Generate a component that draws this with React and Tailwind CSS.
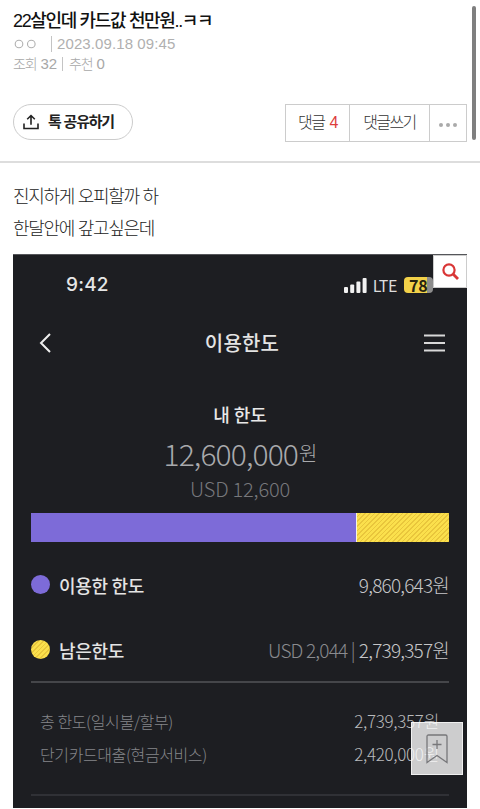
import React from 'react';

const helvetica = "font-['Liberation_Sans','Noto_Sans_CJK_KR',sans-serif]";
const noto = "font-['Noto_Sans_CJK_KR',sans-serif]";

const stripes = 'bg-[repeating-linear-gradient(135deg,#fbe04c_0px,#fbe04c_2.2px,#e9c63c_2.2px,#e9c63c_3.3px)]';

const PostHeader = () => (
    <header className="h-[163px] border-b-2 border-[#dddddd] pl-[13px] pr-[13px] pt-2">
        <h1 className="h-[26px] text-[18px] leading-[26px] font-medium tracking-[-1.35px] text-[#111111]">22살인데 카드값 천만원..ㅋㅋ</h1>
        <div className="flex h-5 items-center text-[15px] leading-5 text-[#b0b0b0]">
            <svg className="w-[23px] h-3 shrink-0" viewBox="0 0 23 12" fill="none" stroke="#b0b0b0" strokeWidth="1.1">
                <circle cx="6" cy="6" r="3.8" />
                <circle cx="18.3" cy="6" r="3.8" />
            </svg>
            <span className="ml-[15px] h-4 w-px bg-[#c4c4c4]"></span>
            <span className="ml-[5px] tracking-[0.1px]">2023.09.18 09:45</span>
        </div>
        <div className="flex h-5 items-center text-[14px] leading-5 font-light text-[#a8a8a8]">
            <span className="tracking-[-1.2px]">조회</span>
            <span className="ml-1 text-[15px] font-normal">32</span>
            <span className="ml-[5px] h-[14px] w-px bg-[#c4c4c4]"></span>
            <span className="ml-[6px] tracking-[-1.2px]">추천</span>
            <span className="ml-1 text-[15px] font-normal">0</span>
        </div>
        <div className="mt-[30px] flex items-start justify-between">
            <button className="flex h-9 w-[120px] items-center rounded-full border border-[#cccccc] pl-[9px]">
                <svg className="h-4 w-4" viewBox="0 0 16 16" fill="none" stroke="#222222" strokeWidth="1.6">
                    <path d="M1 9.5V14.5H15V9.5M8 10.8V1.6M4.2 5.2L8 1.5L11.8 5.2" />
                </svg>
                <span className="ml-[9px] text-[15px] leading-5 font-bold tracking-[-1.2px] whitespace-nowrap text-[#222222]">톡 공유하기</span>
            </button>
            <div className="flex h-[38px] w-[182px] border border-[#cccccc] text-[16px] leading-9 font-light text-[#333333]">
                <button className="flex w-[64px] justify-center border-r border-[#cccccc] tracking-[-1.5px]">
                    댓글<span className="ml-[5px] font-normal text-[#dd3c3c]">4</span>
                </button>
                <button className="w-[80px] border-r border-[#cccccc] tracking-[-1.6px]">댓글쓰기</button>
                <button className="flex flex-1 items-center justify-center gap-[3px] pt-1">
                    <i className="h-1 w-1 rounded-full bg-[#aaaaaa]"></i>
                    <i className="h-1 w-1 rounded-full bg-[#aaaaaa]"></i>
                    <i className="h-1 w-1 rounded-full bg-[#aaaaaa]"></i>
                </button>
            </div>
        </div>
    </header>
);

const StatusBar = () => (
    <div className="flex h-[60px] items-center justify-between pl-[53px] pr-[34px]">
        <span className="font-['Inter',sans-serif] text-[19px] font-medium tracking-[0.2px] text-[#e6e6e6]">9:42</span>
        <div className="flex items-center">
            <svg className="h-[15px] w-[23px]" viewBox="0 0 23 15" fill="#f2f2f2">
                <rect x="0" y="9" width="4" height="6" rx="1" />
                <rect x="6.2" y="6.5" width="4" height="8.5" rx="1" />
                <rect x="12.4" y="3.5" width="4" height="11.5" rx="1" />
                <rect x="18.6" y="0" width="4" height="15" rx="1" />
            </svg>
            <span className="ml-[6px] font-['Noto_Sans_CJK_KR',sans-serif] text-[16px] leading-5 tracking-[-0.4px] text-[#dddddd]">LTE</span>
            <span className="ml-[7px] flex h-4 w-[29px] items-center rounded-[4px] bg-[linear-gradient(to_right,#f2d149_23px,#8d8d8d_23px)] pl-[5px] font-['Noto_Sans_CJK_KR',sans-serif] text-[16px] leading-4 font-bold tracking-[-0.3px] text-[#252211]">78</span>
        </div>
    </div>
);

const Usage = ({ color, label, usd, amount }) => (
    <div className="flex h-[65px] items-center">
        <i className={`h-[19px] w-[19px] rounded-full ${color}`}></i>
        <span className="ml-[9px] text-[18px] leading-6 font-medium tracking-[-0.3px] text-[#e4e4e4]">{label}</span>
        <span className="ml-auto flex text-[19px] leading-6 font-light tracking-[-0.8px] text-[#c6c6c8]">
            {usd && <span className="mr-1 text-[#8a8b8f]">USD {usd} |</span>}
            {amount}원
        </span>
    </div>
);

const Detail = ({ label, amount }) => (
    <div className="flex h-[33px] items-center justify-between pl-[9px] pr-[10px]">
        <span className="text-[16px] leading-6 font-light tracking-[-0.4px] text-[#85868a]">{label}</span>
        <span className="text-[17px] leading-6 font-light tracking-[-0.3px] text-[#b9babc]">{amount}원</span>
    </div>
);

const LimitScreen = () => (
    <section className={`relative mx-[13px] h-[554px] border-t border-[#55565a] bg-[#1d1e22] ${noto}`}>
        <StatusBar />
        <div className="flex h-14 items-center justify-between pl-[26px] pr-[22px]">
            <svg className="h-5 w-3" viewBox="0 0 12 20" fill="none" stroke="#eeeeee" strokeWidth="2">
                <path d="M11 1L2 10L11 19" />
            </svg>
            <h2 className="ml-[9px] text-[20px] leading-7 font-medium tracking-[0.2px] text-[#e4e4e4]">이용한도</h2>
            <svg className="h-[18px] w-[21px]" viewBox="0 0 21 18" stroke="#d8d8d8" strokeWidth="2">
                <path d="M0 1.5H21M0 9H21M0 16.5H21" />
            </svg>
        </div>
        <div className="mt-7 flex flex-col items-center">
            <p className="h-[30px] text-[18px] leading-[30px] font-medium text-[#e8e8e8]">내 한도</p>
            <p className="flex h-[48px] text-[30px] leading-[48px] font-light tracking-[-0.9px] text-[#a9aaad]">
                12,600,000<span className="ml-px text-[20px]">원</span>
            </p>
            <p className="h-[24px] text-[20px] leading-[24px] font-light tracking-[-0.2px] text-[#77787c]">USD 12,600</p>
        </div>
        <div className="mx-[18px]">
            <div className="mt-3 flex h-[29px]">
                <div className="w-[325px] bg-[#7d6bd8]"></div>
                <div className="w-px bg-[#f6f3df]"></div>
                <div className={`flex-1 ${stripes}`}></div>
            </div>
            <div className="mt-[10px]">
                <Usage color="bg-[#7d6bd8]" label="이용한 한도" amount="9,860,643" />
                <Usage color={stripes} label="남은한도" usd="2,044" amount="2,739,357" />
            </div>
            <div className="-mt-px border-y-2 border-t-[#45464a] border-b-[#303136] pt-[21px] pb-[24px]">
                <Detail label="총 한도(일시불/할부)" amount="2,739,357" />
                <Detail label="단기카드대출(현금서비스)" amount="2,420,000" />
            </div>
        </div>
        <button className="absolute top-0 right-0 flex h-[33px] w-[34px] items-center justify-center border border-[#cccccc] bg-white">
            <svg className="h-[17px] w-[17px]" viewBox="0 0 17 17" fill="none" stroke="#d93636" strokeWidth="2.2">
                <circle cx="7" cy="7" r="5.6" />
                <path d="M11 11L16 16" strokeWidth="2.8" />
            </svg>
        </button>
        <button className="absolute top-[467px] right-1 flex h-[53px] w-[52px] items-center justify-center border border-white/70 bg-white/78">
            <svg className="h-[30px] w-[22px]" viewBox="0 0 22 30" fill="none" stroke="#77777a" strokeWidth="1.3">
                <path d="M1 28.5V2.5Q1 1 2.5 1H19.5Q21 1 21 2.5V28.5L11 21.5ZM11 6V15M6.5 10.5H15.5" />
            </svg>
        </button>
    </section>
);

const App = () => (
    <main className={`relative h-[809px] w-[480px] overflow-hidden bg-white ${helvetica}`}>
        <PostHeader />
        <div className="h-[91px] pl-[13px] pt-[18px] text-[18px] leading-8 font-light tracking-[-1.3px] text-[#222222]">
            <p>진지하게 오피할까 하</p>
            <p>한달안에 갚고싶은데</p>
        </div>
        <LimitScreen />
        <i className="absolute top-[6px] right-1 h-[134px] w-1 rounded-full bg-[#7f7f7f]"></i>
    </main>
);

export default App;
